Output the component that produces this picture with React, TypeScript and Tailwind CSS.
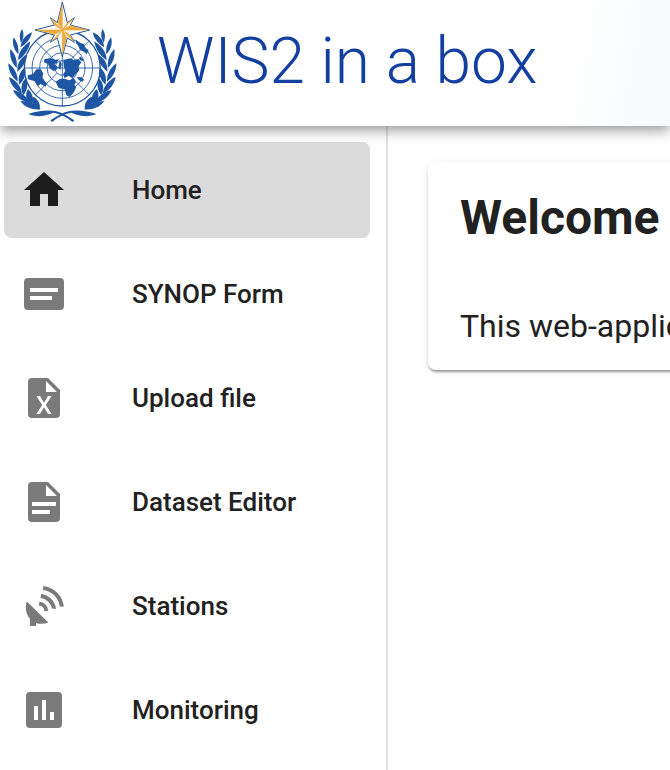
const blue = '#1f56a3';

function Branch() {
  return (
    <g fill={blue}>
      <path d="M67 87C57 99 58 114 63 129 71 116 73 102 67 87Z" />
      <path d="M96 97C79 103 65 117 61 142 79 132 92 117 96 97Z" />
      <path d="M41 112C35 131 42 150 55 163 57 145 53 127 41 112Z" />
      <path d="M91 124C70 137 55 155 54 181 73 168 88 149 91 124Z" />
      <path d="M31 147C28 170 35 189 50 204 53 183 46 162 31 147Z" />
      <path d="M80 163C62 174 50 191 52 215 69 202 80 185 80 163Z" />
      <path d="M25 190C25 212 35 232 53 245 54 222 43 204 25 190Z" />
      <path d="M75 202C60 213 52 232 58 254 73 240 79 223 75 202Z" />
      <path d="M27 231C31 253 44 271 66 281 63 258 49 241 27 231Z" />
      <path d="M77 235C64 247 60 268 70 286 83 270 85 251 77 235Z" />
      <path d="M39 270C47 290 64 304 90 310 81 289 63 275 39 270Z" />
      <path d="M84 267C74 283 77 303 95 317 103 298 98 280 84 267Z" />
      <path d="M61 303C75 322 95 330 122 328 106 312 85 303 61 303Z" />
      <path d="M99 290C91 304 98 321 119 329 122 311 115 298 99 290Z" />
      <path d="M85 342C111 354 146 348 168 333 140 329 109 333 85 342Z" />
      <path d="M166 333C187 338 205 349 223 361L218 366C201 352 183 342 158 338Z" />
    </g>
  );
}

function Logo() {
  return (
    <svg viewBox="0 0 375 378" className="h-[126px] w-[125px] shrink-0" role="img" aria-label="WMO emblem">
      <g fill="none" stroke={blue} strokeWidth="2.6">
        <circle cx="187" cy="204" r="114" strokeWidth="4" />
        <circle cx="187" cy="204" r="91" />
        <circle cx="187" cy="204" r="68" />
        <circle cx="187" cy="204" r="46" />
        <circle cx="187" cy="204" r="22" />
        <path d="M73 204H301M187 90V318M106 123L171 188M203 220L268 285M268 123L203 188M171 220L106 285" />
      </g>
      <g fill={blue}>
        <path d="M133 178L151 174 166 179 177 178 170 189 163 193 174 201 169 210 160 213 149 204 144 192 132 187Z" />
        <path d="M83 226L99 222 109 208 123 208 130 221 127 233 141 252 136 260 122 252 113 259 105 244 84 238Z" />
        <path d="M190 180L211 175 221 180 235 177 244 187 236 199 238 211 225 224 218 234 206 228 193 234 190 222 196 212 191 198Z" />
        <path d="M167 246L179 237 194 236 207 241 221 235 228 246 223 255 229 261 222 276 209 291 199 286 194 268 176 264Z" />
        <path d="M228 119L239 128 252 132 257 144 266 151 260 163 249 153 240 151 235 137 228 130Z" />
        <path d="M230 232L243 231 252 239 247 245 237 241Z" />
        <path d="M240 169L251 179 246 184 237 177ZM179 181L185 192 181 209 175 204Z" />
      </g>
      <Branch />
      <g transform="translate(374 0) scale(-1 1)"><Branch /></g>
      <path d="M187 6L202 68 223 53 211 75 269 90 211 105 223 127 202 114 187 170 172 114 151 127 163 105 105 90 163 75 151 53 172 68Z" fill="#fff" stroke={blue} strokeWidth="3" strokeLinejoin="round" />
      <path d="M187 14V90L174 69ZM262 90H187L209 77ZM187 162V90L200 112ZM112 90H187L165 103ZM220 56L187 90 201 70ZM220 124L187 90 209 104ZM154 124L187 90 173 111ZM154 56L187 90 165 77Z" fill="#eba93c" stroke="#eba93c" strokeWidth="2" />
    </svg>
  );
}

const items = [
  { label: 'Home', d: 'M10 20V14H14V20H19V12H22L12 3 2 12H5V20Z' },
  { label: 'SYNOP Form', d: 'M4 4H20A2 2 0 0 1 22 6V18A2 2 0 0 1 20 20H4A2 2 0 0 1 2 18V6A2 2 0 0 1 4 4M5 9V11H19V9ZM5 13V15H16V13Z' },
  { label: 'Upload file', d: 'M14 2H6A2 2 0 0 0 4 4V20A2 2 0 0 0 6 22H18A2 2 0 0 0 20 20V8L14 2M15.8 20H14L12 16.6 10 20H8.2L11.1 15.5 8.2 11H10L12 14.4 14 11H15.8L12.9 15.5 15.8 20M13 9V3.5L18.5 9H13Z' },
  { label: 'Dataset Editor', d: 'M13 9H18.5L13 3.5V9M6 2H14L20 8V20A2 2 0 0 1 18 22H6A2 2 0 0 1 4 20V4A2 2 0 0 1 6 2M15 18V16H6V18H15M18 14V12H6V14H18Z' },
  { label: 'Stations', d: 'M3.4 9.7C2.4 12.4 2.9 16 5 18.4V22H8V20.5C10 21.2 12.2 21 14.2 20.3ZM9.7 9.9A4.6 4.6 0 0 1 14.1 14.4L12.2 14.6A2.8 2.8 0 0 0 9.4 11.8ZM10.5 6A8.5 8.5 0 0 1 18 13.5L16 13.3A6.6 6.6 0 0 0 10.3 8ZM11.7 2A11.6 11.6 0 0 1 21.9 12.4L19.9 12.2A9.7 9.7 0 0 0 11.4 4Z' },
  { label: 'Monitoring', d: 'M5 3H19A2 2 0 0 1 21 5V19A2 2 0 0 1 19 21H5A2 2 0 0 1 3 19V5A2 2 0 0 1 5 3M7 10V17H9V10ZM11 7V17H13V7ZM15 13V17H17V13Z' },
];

export default function App() {
  return (
    <div className="flex min-h-screen flex-col overflow-x-hidden bg-white font-[Roboto,sans-serif] text-[#212121]">
      <header className="relative z-10 flex h-[126px] items-center gap-8 bg-[linear-gradient(100deg,#ffffff_82%,#f7f9fc)] shadow-[0_4px_8px_-2px_rgba(0,0,0,0.2),0_8px_10px_rgba(0,0,0,0.14),0_2px_20px_rgba(0,0,0,0.12)]">
        <Logo />
        <h1 className="pb-0.5 text-[64px] leading-[76px] font-light whitespace-nowrap text-[#133fa0]">WIS2 in a box</h1>
      </header>
      <div className="flex grow">
        <nav className="flex w-[388px] shrink-0 flex-col gap-2 border-r-2 border-[#e0e0e0] py-4 pr-4 pl-1">
          {items.map((item, i) => (
            <a
              key={item.label}
              href="#"
              aria-current={i === 0 ? 'page' : undefined}
              className={`flex h-24 items-center gap-16 rounded-lg px-4 text-[26px] leading-10 font-medium ${i === 0 ? 'bg-[#dbdbdb]' : ''}`}
            >
              <svg viewBox="0 0 24 24" className={`size-12 shrink-0 ${i === 0 ? 'fill-[#1d1d1d]' : 'fill-[#7a7a7a]'}`} fillRule="evenodd" aria-hidden="true">
                <path d={item.d} />
              </svg>
              {item.label}
            </a>
          ))}
        </nav>
        <main className="min-w-0 grow overflow-hidden pt-9 pl-10">
          <section className="-mr-4 rounded-lg bg-white px-8 pt-6 pb-4 whitespace-nowrap shadow-[0_4px_2px_-2px_rgba(0,0,0,0.2),0_2px_2px_rgba(0,0,0,0.14),0_2px_6px_rgba(0,0,0,0.12)]">
            <h2 className="text-[48px] leading-16 font-bold">Welcome</h2>
            <p className="mt-12 text-[32px] leading-14">This web-application</p>
          </section>
        </main>
      </div>
    </div>
  );
}
